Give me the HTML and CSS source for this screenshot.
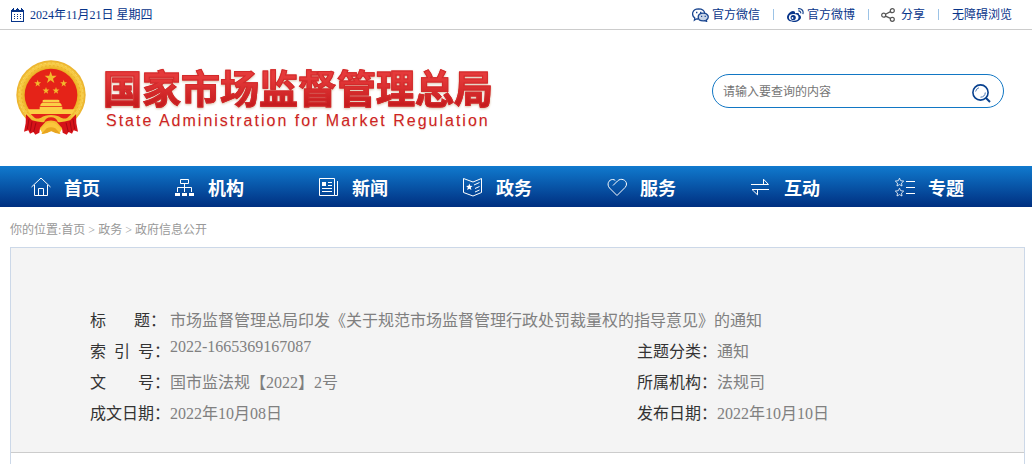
FILE: index.html
```
<!DOCTYPE html>
<html lang="zh-CN">
<head>
    <meta charset="UTF-8">
    <meta name="viewport" content="width=device-width, initial-scale=1.0">
    <title>国家市场监督管理总局</title>
    <link rel="stylesheet" href="styles.css">
</head>
<body>
    <div class="topbar">
        <div class="date">
            <svg width="13" height="14" viewBox="0 0 13 14" fill="none" stroke="#08358a" shape-rendering="crispEdges">
                <path d="M0.5 2.5V13.5H12.5V2.5"/>
                <path d="M0 2.5H13M0 3.5H13M1 1.5H3M5 1.5H8M10 1.5H12M2 0.5H3M6 0.5H7M10 0.5H11"/>
                <path d="M3 6.5H4M6 6.5H7M9 6.5H10M3 8.5H4M6 8.5H7M9 8.5H10M3 10.5H4M6 10.5H7M9 10.5H10"/>
            </svg>
            <span>2024年11月21日 星期四</span>
        </div>
        <div class="links">
            <a href="#">
                <svg width="17" height="14" viewBox="0 0 17 14" fill="none" stroke="#1c4790" stroke-width="1.3">
                    <path d="M6.2 11L4.6 10.8 2.4 12.2 2.8 10C-0.9 7.2 0 1 6.6 0.8 10.2 0.8 12.3 2.8 12.7 5"/>
                    <path d="M11.3 5.1C7.7 5.1 6.2 7.2 6.2 9 6.2 11.5 8.5 12.9 11.3 12.9L12.8 12.7 14.6 13.4 14.3 12.1C18 9.5 16 5.1 11.3 5.1Z" fill="#c8d5e8"/>
                    <path d="M4 4.5H5.4M8 4.5H9.4M9 8.3H10.2M12.6 8.3H13.8"/>
                </svg>
                <span>官方微信</span>
            </a>
            <a href="#">
                <svg width="17" height="14" viewBox="0 0 17 14" fill="none">
                    <path d="M6 3C4 2.8 0 6.2 0 9.3 0 12.2 3.2 14 6.6 14 10.8 14 14 11.7 14 9.2 14 7.6 12.8 7 12 6.7 12.5 5.2 11.5 4.3 8 5.4 8.3 3.8 7.5 3 6 3Z" fill="#08358a"/>
                    <ellipse cx="6.7" cy="9.4" rx="4.8" ry="3.3" fill="#fff"/>
                    <circle cx="6.2" cy="9.5" r="2.6" fill="#08358a"/>
                    <circle cx="5.5" cy="10" r="0.9" fill="#fff"/>
                    <path d="M11 0.8C14.5 0 17 3 15.8 6.1M11.3 3C13 2.7 14 4 13.6 5.4" stroke="#1c4790" stroke-width="1.2"/>
                </svg>
                <span>官方微博</span>
            </a>
            <a href="#" class="share">
                <svg width="14" height="14" viewBox="0 0 14 14" fill="none" stroke="#555" stroke-width="1.2">
                    <circle cx="2.7" cy="7.2" r="2"/>
                    <circle cx="11.3" cy="2.7" r="2"/>
                    <circle cx="11.3" cy="11.3" r="2"/>
                    <path d="M4.5 6.2L9.5 3.6M4.5 8.1L9.5 10.4"/>
                </svg>
                <span>分享</span>
            </a>
            <a href="#">无障碍浏览</a>
        </div>
    </div>

    <header class="header">
        <a href="#" class="logo">
            <svg width="70" height="76" viewBox="0 0 210 228">
                <defs>
                    <radialGradient id="gold">
                        <stop offset="0.75" stop-color="#e9ac20"/>
                        <stop offset="0.88" stop-color="#f8cc45"/>
                        <stop offset="1" stop-color="#eab02a"/>
                    </radialGradient>
                    <polygon id="star" points="0,-19 4.5,-6 18,-5.5 7,3 11,16 0,8 -11,16 -7,3 -18,-5.5 -4.5,-6"/>
                </defs>
                <circle cx="105" cy="105" r="104" fill="url(#gold)"/>
                <circle cx="105" cy="105" r="96" fill="none" stroke="#f7d761" stroke-width="3" stroke-dasharray="8 5"/>
                <circle cx="105" cy="105" r="88" fill="none" stroke="#e8ae28" stroke-width="3" stroke-dasharray="5 7"/>
                <circle cx="105" cy="105" r="79" fill="#e52318"/>
                <g fill="#f2b92d">
                    <use href="#star" x="104" y="53"/>
                    <use href="#star" transform="translate(65 70) scale(.58)"/>
                    <use href="#star" transform="translate(143 70) scale(.58)"/>
                    <use href="#star" transform="translate(90 92) scale(.58)"/>
                    <use href="#star" transform="translate(120 92) scale(.58)"/>
                </g>
                <path d="M80 121L84 119H126L130 121V127H80ZM73 134L78 128H132L137 134V138H73ZM71 140H139V148H177Q172 158 166 164H44Q38 158 35 148H71Z" fill="#fbcf45"/>
                <path d="M44 162H166L146 181Q105 197 64 181Z" fill="#e52318"/>
                <path d="M32 164Q54 181 75 173Q86 165 105 165Q124 165 135 173Q156 181 178 164L164 202Q105 222 46 202Z" fill="#f3bd31"/>
                <path d="M84 187Q89 172 105 172Q121 172 126 187Q105 176 84 187Z" fill="#e52318"/>
                <path d="M30 163L48 181Q68 188 88 186L72 204 70 218 58 224 52 216 42 221 37 211 24 215 29 190Z" fill="#d51218"/>
                <path d="M180 163L162 181Q142 188 122 186L138 204 140 218 152 224 158 216 168 221 173 211 186 215 181 190Z" fill="#d51218"/>
                <path d="M39 177L34 207M48 184L43 214M60 188L53 216M171 177L176 207M162 184L167 214M150 188L157 216" stroke="#a90712" stroke-width="3" fill="none"/>
                <path d="M73 208L91 191Q105 184 119 191L137 208 130 221 108 213 80 222Z" fill="#fbc63c"/>
                <path d="M76 222L92 205Q105 198 118 205L134 222Q120 222 105 213Q90 223 76 222Z" fill="#e8a51f"/>
            </svg>
            <span class="logo-text">
                <strong>国家市场监督管理总局</strong>
                <em>State Administration for Market Regulation</em>
            </span>
        </a>
        <form class="search">
            <input type="text" placeholder="请输入要查询的内容" aria-label="请输入要查询的内容">
            <button type="button" aria-label="搜索">
                <svg width="19" height="19" viewBox="0 0 19 19" fill="none" stroke="#08418f">
                    <circle cx="8.5" cy="8.5" r="7.6" stroke-width="1.6"/>
                    <path d="M14 14L18 18" stroke-width="2"/>
                    <path d="M3.6 7.5Q4.2 4.6 7 3.7M8.5 13.2Q13 13 13.3 8.5" stroke="#4d79b3" stroke-width="1"/>
                </svg>
            </button>
        </form>
    </header>

    <nav class="nav">
        <a href="#">
            <svg width="20" height="20" viewBox="0 0 20 20">
                <path d="M0.5 10L10 1 19.5 10M3.5 8V18.5H16.5V8M7.5 18V11.5H12.5V18"/>
            </svg>
            <span>首页</span>
        </a>
        <a href="#">
            <svg width="20" height="20" viewBox="0 0 20 20">
                <path d="M5.5 2.5H13.5V6.5H5.5ZM9.5 7V11M2.5 15V10.5H16.5V15M9.5 10V15"/>
                <path d="M0 17.5H5M7 17.5H12M14 17.5H19" stroke-width="3"/>
            </svg>
            <span>机构</span>
        </a>
        <a href="#">
            <svg width="20" height="20" viewBox="0 0 20 20">
                <path d="M0.5 1.5H15.5V18.5H0.5ZM18.5 4V18.5H15.5M9 5.5H13M9 8.5H13M3 11.5H13M3 14.5H13"/>
                <path d="M3 5H7V9H3Z" fill="#fff" stroke="none"/>
            </svg>
            <span>新闻</span>
        </a>
        <a href="#">
            <svg width="20" height="20" viewBox="0 0 20 20">
                <path d="M0.5 1.5L10 5 18.5 1.5V15.5L10 19 0.5 15.5ZM11 8L16.5 5.5M12 11.5L16.5 9.5M12 15L16.5 13"/>
                <path d="M6.3 6.5L7.2 8.7 9.5 8.9 7.8 10.5 8.4 12.9 6.3 11.7 4.2 12.9 4.8 10.5 3.2 8.9 5.5 8.7Z" fill="#fff" stroke="none"/>
            </svg>
            <span>政务</span>
        </a>
        <a href="#">
            <svg width="20" height="20" viewBox="0 0 20 20">
                <path d="M10 18.5L2.5 11C-0.5 7.5 1.5 2.5 5.7 2.5Q7.3 2.5 8.3 3.5M6 8.5L10.5 4C14 0.5 19.5 3 19.5 7Q19.5 9 18 10.5L10 18.5"/>
            </svg>
            <span>服务</span>
        </a>
        <a href="#">
            <svg width="20" height="20" viewBox="0 0 20 20">
                <path d="M0 7.5H17.5L12.5 2.2V7M18 12.5H1L6.5 17.8V13"/>
            </svg>
            <span>互动</span>
        </a>
        <a href="#">
            <svg width="20" height="20" viewBox="0 0 20 20">
                <path d="M4.5 1.2L5.7 3.7 8.7 4.1 6.5 6.1 7 9 4.5 7.6 2 9 2.5 6.1 0.3 4.1 3.3 3.7ZM4.5 11.2L5.7 13.7 8.7 14.1 6.5 16.1 7 19 4.5 17.6 2 19 2.5 16.1 0.3 14.1 3.3 13.7Z" stroke-width=".8"/>
                <path d="M11 4.5H20M11 10.5H20M11 16.5H20"/>
            </svg>
            <span>专题</span>
        </a>
    </nav>

    <div class="position">你的位置:<a href="#">首页</a> &gt; <a href="#">政务</a> &gt; <a href="#">政府信息公开</a></div>

    <main class="content">
        <div class="info">
            <table>
                <colgroup>
                    <col class="col-label">
                    <col class="col-value">
                    <col class="col-label">
                    <col>
                </colgroup>
                <tr>
                    <th scope="row">标&nbsp;&nbsp;&nbsp;&nbsp;&nbsp;&nbsp;&nbsp;题：</th>
                    <td colspan="3">市场监督管理总局印发《关于规范市场监督管理行政处罚裁量权的指导意见》的通知</td>
                </tr>
                <tr>
                    <th scope="row">索&nbsp;&nbsp;引&nbsp;&nbsp;号：</th>
                    <td>2022-1665369167087</td>
                    <th scope="row">主题分类：</th>
                    <td>通知</td>
                </tr>
                <tr>
                    <th scope="row">文&nbsp;&nbsp;&nbsp;&nbsp;&nbsp;&nbsp;&nbsp;&nbsp;号：</th>
                    <td>国市监法规【2022】2号</td>
                    <th scope="row">所属机构：</th>
                    <td>法规司</td>
                </tr>
                <tr>
                    <th scope="row">成文日期：</th>
                    <td>2022年10月08日</td>
                    <th scope="row">发布日期：</th>
                    <td>2022年10月10日</td>
                </tr>
            </table>
        </div>
    </main>
</body>
</html>
```
FILE: styles.css
```
* {
    box-sizing: border-box;
}
body {
    margin: 0;
    min-height: 100vh;
    display: flex;
    flex-direction: column;
    background: #fff;
    font-family: "Liberation Serif", "Noto Sans CJK SC", serif;
    font-size: 12px;
}
a {
    color: inherit;
    text-decoration: none;
}
svg {
    display: block;
    flex: none;
}

.topbar {
    display: flex;
    justify-content: space-between;
    align-items: center;
    height: 30px;
    padding: 0 20px 0 11px;
    border-bottom: 1px solid #ccc;
    color: #08358a;
}
.date {
    display: flex;
    align-items: center;
    gap: 6px;
    line-height: 12px;
}
.links {
    display: flex;
    align-items: center;
}
.links a {
    display: flex;
    align-items: center;
    gap: 3px;
    line-height: 12px;
}
.links .share {
    gap: 6px;
}
.links a + a::before {
    content: "";
    width: 1px;
    height: 11px;
    margin: 0 10px 0 13px;
    background: #9cc3e6;
}
.links .share::before {
    margin-right: 6px;
}

.header {
    display: flex;
    justify-content: space-between;
    padding: 30px 28px 30px 16px;
}
.logo {
    display: flex;
    gap: 17px;
}
.logo-text {
    display: flex;
    flex-direction: column;
    padding-top: 9px;
    color: #cf2323;
}
.logo-text strong {
    font-size: 39px;
    line-height: 42px;
    background: linear-gradient(#e53a3a 20%, #c41a1c 90%);
    background-clip: text;
    -webkit-background-clip: text;
    -webkit-text-stroke: 1px #d22a2b;
    color: transparent;
    filter: drop-shadow(0 1px 1px #d8c0a8);
}
.logo-text em {
    padding-left: 3px;
    font-family: "Liberation Sans", sans-serif;
    font-size: 16px;
    font-style: normal;
    line-height: 20px;
    letter-spacing: 2px;
    text-shadow: 0 1px 1px #e8d8c8;
}
.search {
    display: flex;
    align-items: center;
    width: 292px;
    height: 34px;
    margin-top: 14px;
    padding: 0 12px 0 10px;
    border: 1px solid #1277c4;
    border-radius: 17px;
}
.search input {
    flex: 1;
    min-width: 0;
    padding: 2px 0 0;
    border: none;
    outline: none;
    background: none;
    font: inherit;
}
.search input::placeholder {
    color: #757575;
}
.search button {
    padding: 4px 0 0;
    border: none;
    background: none;
    cursor: pointer;
}

.nav {
    display: flex;
    height: 41px;
    padding: 0 12px;
    background: linear-gradient(#107ace, #002f80);
    color: #fff;
}
.nav a {
    flex: 1;
    display: flex;
    align-items: center;
    gap: 13px;
    padding-left: 19px;
    font-size: 18px;
    font-weight: bold;
}
.nav svg {
    fill: none;
    stroke: #fff;
}

.position {
    height: 40px;
    padding-left: 10px;
    line-height: 46px;
    color: #999;
}

.content {
    flex: 1;
    margin: 0 7px 0 10px;
    border: 1px solid #ccd8e8;
    border-bottom: none;
}
.info {
    padding: 55px 0 25px 79px;
    background: #f4f4f4;
    border-bottom: 1px solid #ccc;
}
.info table {
    width: 100%;
    table-layout: fixed;
    border-collapse: collapse;
    font-size: 16px;
}
.info th,
.info td {
    height: 31px;
    padding: 4px 0 3px;
    text-align: left;
    vertical-align: top;
    white-space: nowrap;
    font-weight: normal;
    color: #333;
}
.info td {
    color: #808080;
}
.col-label {
    width: 80px;
}
.col-value {
    width: 50%;
}
```
